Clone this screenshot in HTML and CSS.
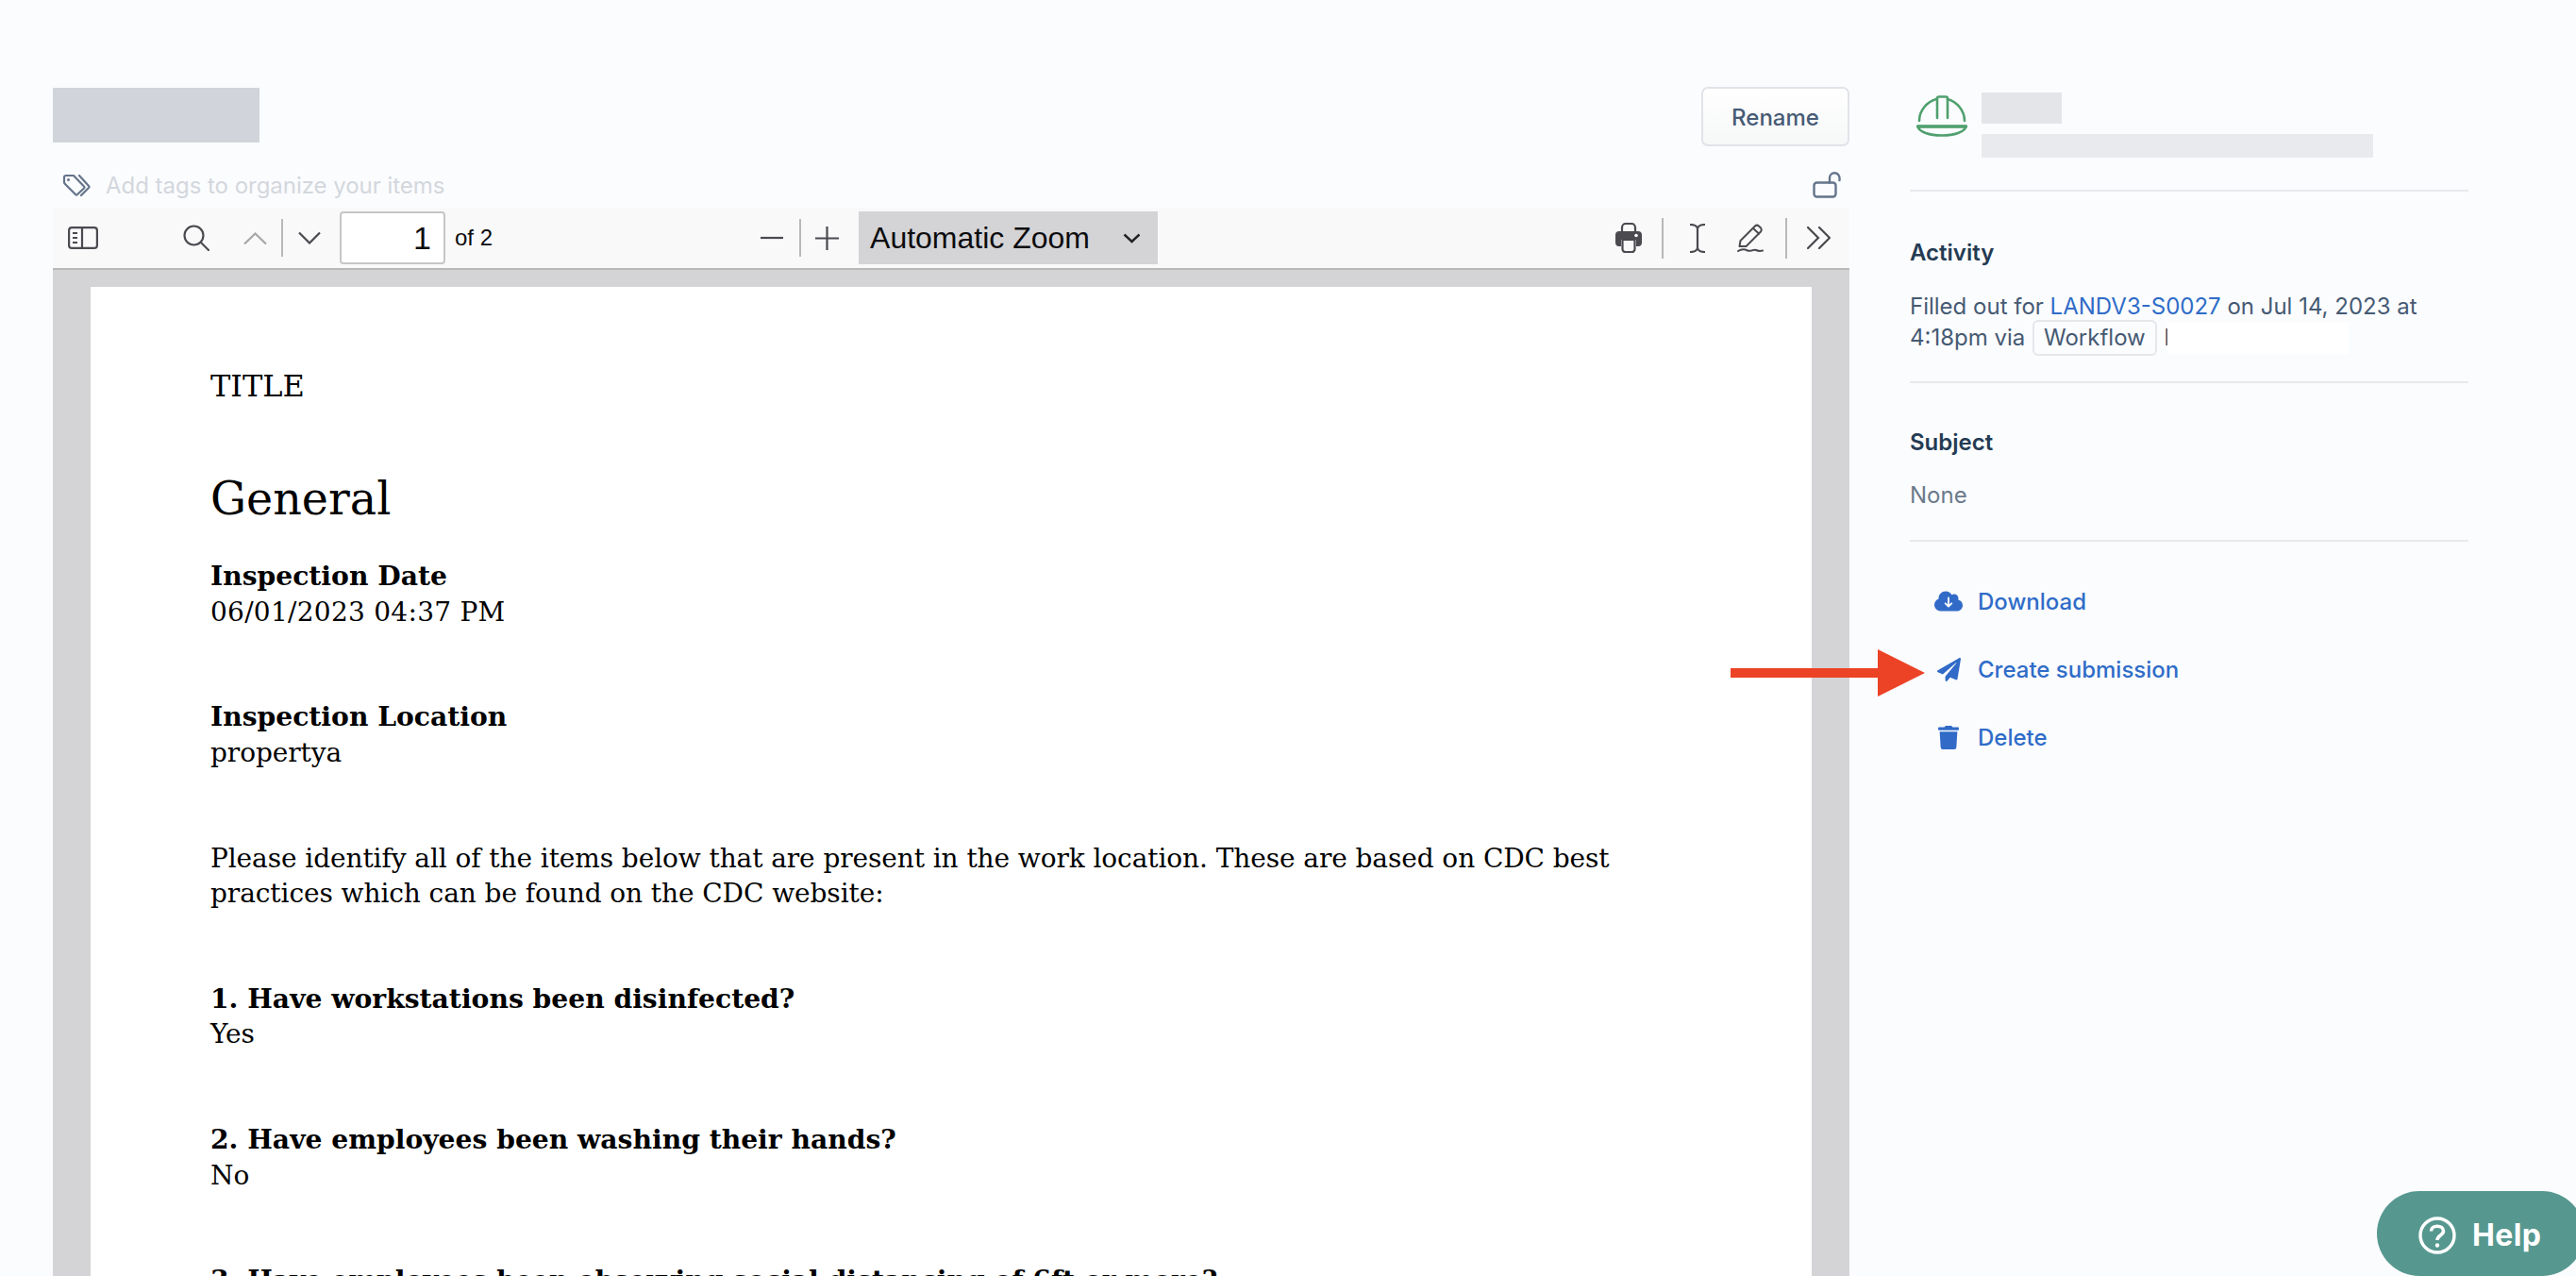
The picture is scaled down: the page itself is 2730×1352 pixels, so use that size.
FILE: index.html
```html
<!DOCTYPE html>
<html lang="en">
<head>
<meta charset="utf-8">
<title>Document</title>
<link rel="stylesheet" href="styles.css">
</head>
<body>
<div class="page">
  <main class="doc">
    <div class="doc-head">
      <div class="title-redact"></div>
      <button class="rename">Rename</button>
    </div>
    <div class="tags">
      <svg class="tag-icon" viewBox="0 0 30 24" fill="none" stroke="#64748b" stroke-width="2.2" stroke-linejoin="round" stroke-linecap="round">
        <path d="M2 4 Q2 2 4 2 H12 L23 13.5 Q24 14.5 23 15.5 L16 22 Q15 23 14 22 L3 11 Q2 10 2 9 Z"/>
        <path d="M18 2 L28 13 Q29 14 28 15 L20 23"/>
        <circle cx="6.5" cy="6.5" r="1.5" fill="#64748b" stroke="none"/>
      </svg>
      <span class="tags-text">Add tags to organize your items</span>
      <svg class="lock" viewBox="0 0 30 28" fill="none" stroke="#64748b" stroke-width="2.4" stroke-linecap="round" stroke-linejoin="round">
        <rect x="1.5" y="11.5" width="23" height="15" rx="3"/>
        <path d="M18 11.5 V6.5 A5 5 0 0 1 28.5 6.5 V9"/>
      </svg>
    </div>
    <div class="toolbar">
      <svg class="ic ic-side" viewBox="0 0 32 24" fill="none" stroke="#4a4a4f" stroke-width="2.2">
        <rect x="1.1" y="1.1" width="29.8" height="21.8" rx="3"/>
        <path d="M15 1 V23"/>
        <path d="M5 7 H10 M5 12 H10 M5 17 H10"/>
      </svg>
      <svg class="ic ic-search" viewBox="0 0 28 28" fill="none" stroke="#4a4a4f" stroke-width="2.2" stroke-linecap="round">
        <circle cx="11.5" cy="11.5" r="10"/>
        <path d="M19 19 L27 27"/>
      </svg>
      <svg class="ic ic-up" viewBox="0 0 25 13" fill="none" stroke="#a8a8a8" stroke-width="2.2"><path d="M1 12.5 L12.5 1.5 L24 12.5"/></svg>
      <span class="sep sep-nav"></span>
      <svg class="ic ic-down" viewBox="0 0 24 13" fill="none" stroke="#4a4a4f" stroke-width="2.2"><path d="M1 .5 L12 11.5 L23 .5"/></svg>
      <input class="page-num" value="1" aria-label="Page">
      <span class="page-of">of 2</span>
      <svg class="ic ic-minus" viewBox="0 0 24 24" fill="none" stroke="#4a4a4f" stroke-width="2.2"><path d="M0 12 H24"/></svg>
      <span class="sep sep-zoom"></span>
      <svg class="ic ic-plus" viewBox="0 0 25 25" fill="none" stroke="#4a4a4f" stroke-width="2.2"><path d="M0 12.5 H25 M12.5 0 V25"/></svg>
      <div class="zoom-select">
        <span>Automatic Zoom</span>
        <svg class="zoom-caret" viewBox="0 0 19 11" fill="none" stroke="#222" stroke-width="2.4"><path d="M1.5 1.5 L9.5 9 L17.5 1.5"/></svg>
      </div>
      <svg class="ic ic-print" viewBox="0 0 28 32" fill="#4a4a4f">
        <path d="M7 9 V5 a4 4 0 0 1 4 -4 h6 a4 4 0 0 1 4 4 v4" fill="none" stroke="#4a4a4f" stroke-width="2.2"/>
        <path d="M4 9 H24 a4 4 0 0 1 4 4 V21 a4 4 0 0 1 -4 4 H22 V18 H6 V25 H4 a4 4 0 0 1 -4 -4 V13 a4 4 0 0 1 4 -4 Z"/>
        <path d="M7.5 18 H20.5 V28 a3 3 0 0 1 -3 3 H10.5 a3 3 0 0 1 -3 -3 Z" fill="none" stroke="#4a4a4f" stroke-width="2.2"/>
        <circle cx="22" cy="13.5" r="1.8" fill="#fff"/>
      </svg>
      <span class="sep sep-print"></span>
      <svg class="ic ic-text" viewBox="0 0 16 31" fill="none" stroke="#4a4a4f" stroke-width="2.2" stroke-linecap="round">
        <path d="M0 1 C4 1 7 2 8 5 C9 2 12 1 16 1"/>
        <path d="M8 5 V26"/>
        <path d="M0 30 C4 30 7 29 8 26 C9 29 12 30 16 30"/>
      </svg>
      <svg class="ic ic-pen" viewBox="0 0 28 31" fill="none" stroke="#4a4a4f" stroke-width="2" stroke-linecap="round" stroke-linejoin="round">
        <path d="M2.5 24 L3.5 18 L19 2.5 Q21 .8 23 2.5 L25 4.5 Q26.5 6.5 25 8.5 L9.5 24 Z"/>
        <path d="M17 5 L23 10.5"/>
        <path d="M1 29 C5 26.5 8 27 11 28.5 C14 30 17 27 20 28 C23 29.5 25 29 27 28.5"/>
      </svg>
      <span class="sep sep-edit"></span>
      <svg class="ic ic-more" viewBox="0 0 25 24" fill="none" stroke="#4a4a4f" stroke-width="2.2" stroke-linecap="round"><path d="M1 1 L12 12 L1 23 M13 1 L24 12 L13 23"/></svg>
    </div>
    <div class="viewer">
      <article class="sheet">
        <p class="pdf-title">TITLE</p>
        <h1 class="pdf-h1">General</h1>
        <div class="field first">
          <strong>Inspection Date</strong>
          <span class="date">06/01/2023 04:37 PM</span>
        </div>
        <div class="field">
          <strong>Inspection Location</strong>
          <span>propertya</span>
        </div>
        <div class="field">
          <span>Please identify all of the items below that are present in the work location. These are based on CDC best</span>
          <span>practices which can be found on the CDC website:</span>
        </div>
        <div class="field">
          <strong>1. Have workstations been disinfected?</strong>
          <span>Yes</span>
        </div>
        <div class="field">
          <strong>2. Have employees been washing their hands?</strong>
          <span>No</span>
        </div>
        <div class="field">
          <strong>3. Have employees been observing social distancing of 6ft or more?</strong>
        </div>
      </article>
    </div>
  </main>
  <aside class="side">
    <div class="person">
      <svg class="helmet" viewBox="0 0 54 44" fill="none" stroke="#4fa06e" stroke-width="2.6" stroke-linecap="round" stroke-linejoin="round">
        <path d="M3 27 C3 16 11 7 21 4 M33 4 C43 7 51 16 51 27"/>
        <path d="M22 24 V3.5 Q22 1.5 24 1.5 H31 Q33 1.5 33 3.5 V24"/>
        <path d="M1.5 33 H52.5 C51 39 40 42.5 27 42.5 C14 42.5 3 39 1.5 33 Z"/>
        <path d="M1.5 33 H52.5" stroke-width="3.4"/>
      </svg>
      <div class="person-lines">
        <div class="redact-name"></div>
        <div class="redact-mail"></div>
      </div>
    </div>
    <section class="block block-activity">
      <h2>Activity</h2>
      <p class="activity-text">Filled out for <a href="#">LANDV3-S0027</a> on Jul 14, 2023 at<br>4:18pm via <span class="badge">Workflow</span> <span class="cut">l<span class="white-box"></span></span></p>
    </section>
    <section class="block block-subject">
      <h2>Subject</h2>
      <p class="none">None</p>
    </section>
    <nav class="actions">
      <a class="action" href="#">
        <span class="act-ic"><svg class="i-cloud" viewBox="0 0 640 512"><path fill="#316bc7" d="M537.6 226.6c4.1-10.7 6.4-22.4 6.4-34.6 0-53-43-96-96-96-19.7 0-38.1 6-53.3 16.2C367 64.2 315.3 32 256 32c-88.4 0-160 71.6-160 160 0 2.7.1 5.4.2 8.1C40.2 219.8 0 273.2 0 336c0 79.5 64.5 144 144 144h368c70.7 0 128-57.3 128-128 0-61.9-44-113.6-102.4-125.4z"/><path fill="none" stroke="#fff" stroke-width="40" stroke-linecap="round" stroke-linejoin="round" d="M320 180V370M250 305L320 375L390 305"/></svg></span>
        Download
      </a>
      <a class="action" href="#">
        <span class="act-ic"><svg class="i-plane" viewBox="0 0 512 512"><path fill="#316bc7" d="M476 3.2L12.5 270.6c-18.1 10.4-15.8 35.6 2.2 43.2L121 358.4l287.3-253.2c5.5-4.9 13.3 2.6 8.6 8.3L176 407v80.5c0 23.6 28.5 32.9 42.5 15.8L282 426l124.6 52.2c14.2 6 30.4-2.9 33-18.2l72-432C515 7.8 493.3-6.8 476 3.2z"/></svg></span>
        Create submission
      </a>
      <a class="action" href="#">
        <span class="act-ic"><svg class="i-trash" viewBox="0 0 448 512"><path fill="#316bc7" d="M432 32H312l-9.4-18.7A24 24 0 0 0 281.1 0H166.8a23.72 23.72 0 0 0-21.4 13.3L136 32H16A16 16 0 0 0 0 48v32a16 16 0 0 0 16 16h416a16 16 0 0 0 16-16V48a16 16 0 0 0-16-16zM53.2 467a48 48 0 0 0 47.9 45h245.8a48 48 0 0 0 47.9-45L416 128H32z"/></svg></span>
        Delete
      </a>
    </nav>
  </aside>
</div>
<svg class="callout" viewBox="0 0 206 50"><path fill="#ec4226" d="M0 20 H156 V0 L206 25 L156 50 V30 H0 Z"/></svg>
<button class="help">
  <svg class="help-ic" viewBox="0 0 40 40" fill="none" stroke="#fff" stroke-width="3.4"><circle cx="20" cy="20" r="18"/><path d="M13.5 15.5 C13.5 8.5 26.5 8.5 26.5 15.5 C26.5 20 20 19.5 20 25" stroke-width="3.6"/><circle cx="20" cy="30.5" r="2.2" fill="#fff" stroke="none"/></svg>
  <span>Help</span>
</button>
</body>
</html>
```
FILE: styles.css
```css
* { box-sizing: border-box; }
html, body { margin: 0; height: 100%; overflow: hidden; }
body { background: #fbfcfe; font-family: Inter, "Liberation Sans", sans-serif; }
.page { display: flex; height: 1352px; padding-left: 56px; overflow: hidden; }

/* Document column */
.doc { width: 1904px; flex: none; padding-top: 92px; display: flex; flex-direction: column; }
.doc-head { display: flex; justify-content: space-between; align-items: flex-start; height: 63px; }
.title-redact { width: 219px; height: 58px; margin-top: 1px; background: #d1d5db; }
.rename { width: 157px; height: 63px; padding-top: 3px; border: 2px solid #e0e3e8; border-radius: 7px; background: linear-gradient(#fff, #f6f7f7); color: #475b75; font: 500 24px Inter, sans-serif; }
.tags { display: flex; align-items: center; height: 30px; margin-top: 26px; padding-left: 10px; padding-right: 9px; }
.tag-icon { width: 30px; height: 24px; }
.tags-text { margin-left: 16px; font-size: 24px; color: #d3d7dd; letter-spacing: -.03px; }
.lock { width: 30px; height: 28px; margin-left: auto; }

/* PDF toolbar */
.toolbar { display: flex; align-items: center; height: 66px; margin-top: 9px; padding: 0 20px 0 16px; background: #f9f9fa; border-bottom: 2px solid #b8b8b8; flex: none; }
.ic { display: block; flex: none; }
.ic-side { width: 32px; height: 24px; }
.ic-search { width: 28px; height: 28px; margin-left: 90px; }
.ic-up { width: 25px; height: 13px; margin-left: 36px; }
.sep { display: block; width: 2px; height: 40px; background: #b8b8b8; flex: none; }
.sep-nav { margin-left: 15px; }
.ic-down { width: 24px; height: 13px; margin-left: 16px; }
.page-num { width: 112px; height: 56px; margin-left: 20px; padding: 0 13px 0 0; border: 2px solid #c6c6c6; border-radius: 4px; background: #fff; text-align: right; font: 34px "Liberation Sans", sans-serif; color: #0c0c0d; }
.page-of { margin-left: 10px; font: 24px "Liberation Sans", sans-serif; color: #0c0c0d; }
.ic-minus { width: 24px; height: 24px; margin-left: 284px; }
.sep-zoom { margin-left: 17px; }
.ic-plus { width: 25px; height: 25px; margin-left: 15px; }
.zoom-select { display: flex; align-items: center; width: 317px; height: 56px; margin-left: 21px; padding-left: 12px; background: #d4d4d7; font: 32px "Liberation Sans", sans-serif; color: #0c0c0d; }
.zoom-caret { width: 19px; height: 11px; margin-left: 35px; }
.ic-print { width: 28px; height: 32px; margin-left: auto; }
.sep-print { height: 43px; margin-left: 21px; }
.ic-text { width: 16px; height: 31px; margin-left: 28px; }
.ic-pen { width: 28px; height: 31px; margin-left: 34px; }
.sep-edit { height: 43px; margin-left: 23px; }
.ic-more { width: 25px; height: 24px; margin-left: 21px; }

/* PDF viewer */
.viewer { flex: 1; min-height: 0; padding: 18px 40px 0; background: #d4d4d7; overflow: hidden; }
.sheet { height: 1200px; padding: 85px 0 0 127px; background: #fff; color: #000; font-family: "DejaVu Serif", serif; font-size: 28px; line-height: 37.5px; letter-spacing: -.085px; }
.pdf-title { margin: 0; font-size: 32px; line-height: 40px; letter-spacing: 0; }
.pdf-h1 { margin: 70px 0 0; font-size: 47.6px; line-height: 60px; font-weight: 400; letter-spacing: 0; }
.field { margin-top: 74.3px; }
.field.first { margin-top: 33px; }
.field strong, .field span { display: block; }
.field strong { font-weight: 700; font-size: 28.2px; letter-spacing: 0; }
.field .date { letter-spacing: .27px; }

/* Sidebar */
.side { width: 592px; flex: none; margin-left: 64px; padding-top: 98px; color: #465a73; }
.person { display: flex; align-items: flex-start; height: 105px; padding-left: 7px; border-bottom: 2px solid #e8e9ec; }
.helmet { width: 54px; height: 44px; margin-top: 3px; flex: none; }
.person-lines { margin-left: 15px; }
.redact-name { width: 85px; height: 33px; background: #e3e5e9; }
.redact-mail { width: 415px; height: 25px; margin-top: 11px; background: #e9eaed; }
.block { border-bottom: 2px solid #e8e9ec; }
.block h2 { margin: 0; font-size: 24px; line-height: 32px; font-weight: 600; color: #243b53; }
.block-activity { padding: 49px 0 30px; }
.block-subject { padding: 47px 0 31px; }
.activity-text { margin: 24px 0 0; font-size: 24px; line-height: 33px; color: #465a73; }
.activity-text a { color: #2f6cc8; text-decoration: none; }
.badge { margin-left: 1px; padding: 2px 10px 3px; border: 2px solid #e5e7eb; border-radius: 6px; background: #fbfcfe; }
.cut { position: relative; margin-left: 1px; }
.white-box { position: absolute; left: 4px; top: -2px; width: 192px; height: 34px; background: #fff; }
.none { margin: 24px 0 0; font-size: 24px; line-height: 32px; color: #6b7a8c; }
.actions { display: flex; flex-direction: column; gap: 36px; padding: 45px 0 0 26px; }
.action { display: flex; align-items: center; height: 36px; color: #2f6cc8; font-size: 24px; font-weight: 500; text-decoration: none; }
.act-ic { display: flex; justify-content: center; width: 30px; margin-right: 16px; }
.i-cloud { width: 30px; height: 24px; }
.i-plane { width: 25px; height: 25px; }
.i-trash { width: 22px; height: 25px; }

/* Overlays */
.callout { position: absolute; left: 1834px; top: 688px; width: 206px; height: 50px; }
.help { position: fixed; left: 2519px; top: 1262px; display: flex; align-items: center; width: 220px; height: 90px; padding: 3px 0 0 44px; border: 0; border-radius: 45px; background: #569890; color: #fff; font: 700 32px Inter, sans-serif; letter-spacing: .4px; }
.help-ic { width: 40px; height: 40px; margin-right: 17px; }
```
